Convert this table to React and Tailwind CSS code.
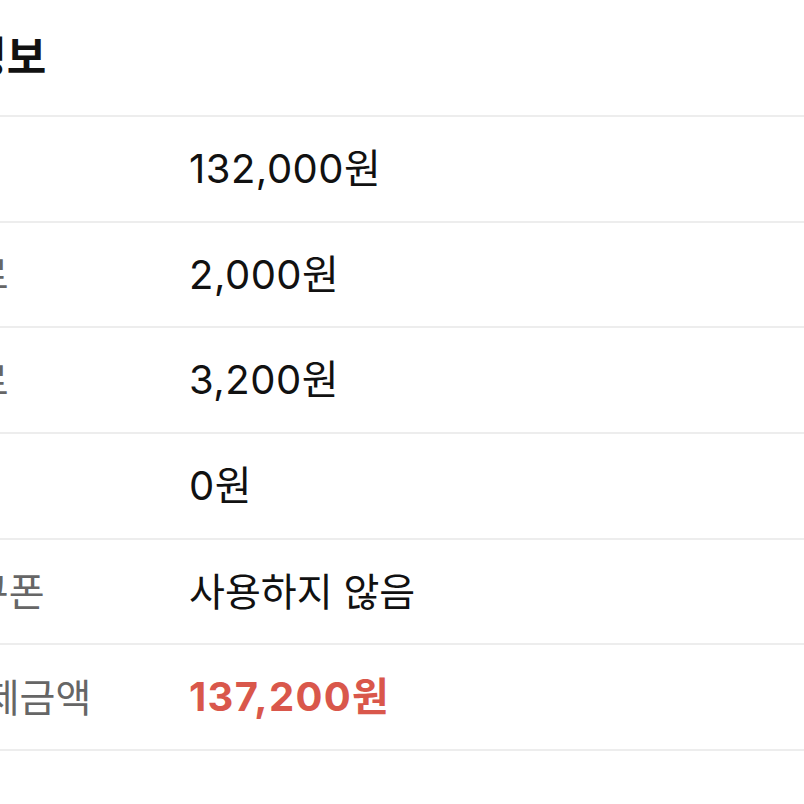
export default function App() {
  const rows = [
    { label: "가격", value: "132,000원", cls: "text-[40px] text-[#111] tracking-[0.5px]" },
    { label: "배송료", value: "2,000원", cls: "text-[40px] text-[#111] tracking-[0.5px]" },
    { label: "수수료", value: "3,200원", cls: "text-[40px] text-[#111] tracking-[0.5px]" },
    { label: "할인", value: "0원", cls: "text-[40px] text-[#111] tracking-[0.5px]" },
    { label: "할인쿠폰", value: "사용하지 않음", cls: "text-[39px] text-[#111]" },
    { label: "총 결제금액", value: "137,200원", cls: "text-[40px] font-bold text-[#d9574b] tracking-[1.3px]" },
  ];
  const font = { fontFamily: '"Inter", "Noto Sans CJK KR", sans-serif' };
  return (
    <div className="w-[804px] h-[804px] bg-white overflow-hidden" style={font}>
      <div className="ml-[-112px] w-[916px]">
        <div className="h-[115px] flex items-center">
          <h2 className="text-[43px] font-bold text-[#111] leading-none">결제정보</h2>
        </div>
        <div className="ml-[13px]">
          {rows.map((r, i) => (
            <div key={i} className="h-[105.7px] flex items-center border-t-2 border-[#ededed]">
              <div className="w-[288px] text-[39px] text-[#666] leading-none">{r.label}</div>
              <div className={r.cls + " leading-none"}>{r.value}</div>
            </div>
          ))}
          <div className="border-t-2 border-[#ededed]" />
        </div>
      </div>
    </div>
  );
}
